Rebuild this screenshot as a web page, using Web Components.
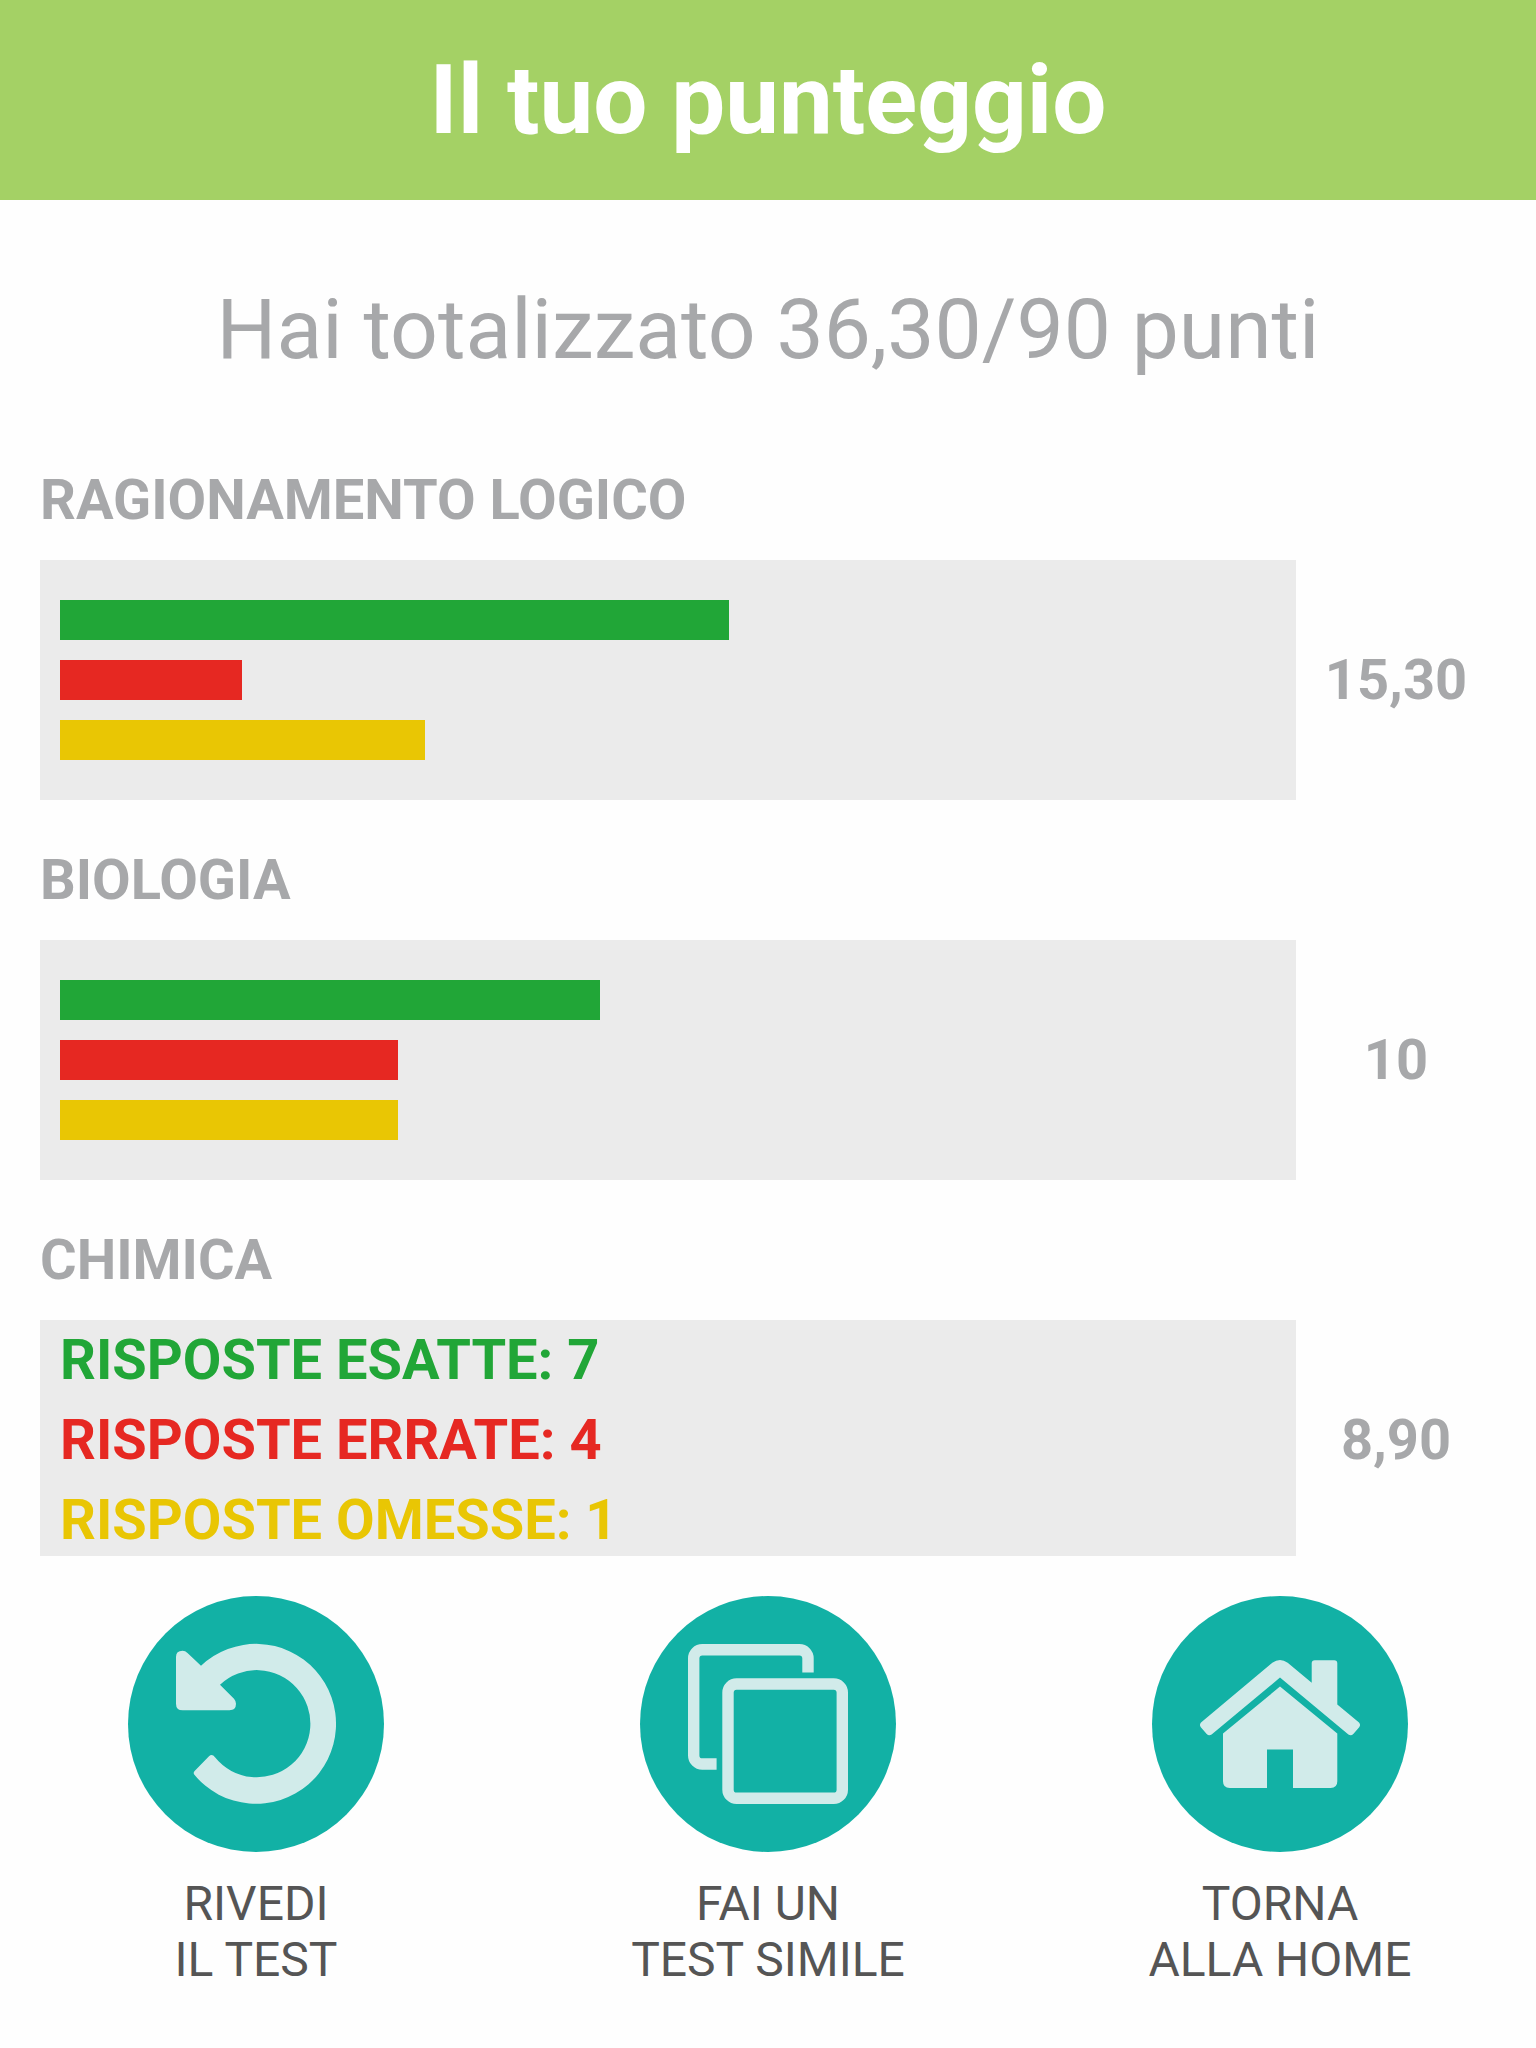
<!DOCTYPE html>
<html lang="it">
<head>
<meta charset="utf-8">
<meta name="viewport" content="width=device-width, initial-scale=1">
<title>Il tuo punteggio</title>
<style>
	body {
		margin: 0;
		background: #fefefe;
		font-family: Roboto, "Liberation Sans", sans-serif;
	}
</style>
</head>
<body>
<score-page>
	<score-header slot="header">Il tuo punteggio</score-header>
	<score-total>Hai totalizzato 36,30/90 punti</score-total>
	<score-subject name="RAGIONAMENTO LOGICO" correct="11" wrong="3" blank="6" score="15,30"></score-subject>
	<score-subject name="BIOLOGIA" correct="8" wrong="5" blank="5" score="10"></score-subject>
	<score-subject name="CHIMICA" correct="7" wrong="4" blank="1" score="8,90" open></score-subject>
	<score-action slot="actions" icon="undo" href="#rivedi">RIVEDI<br>IL TEST</score-action>
	<score-action slot="actions" icon="copy" href="#simile">FAI UN<br>TEST SIMILE</score-action>
	<score-action slot="actions" icon="home" href="#home">TORNA<br>ALLA HOME</score-action>
</score-page>

<script>
class ScoreElement extends HTMLElement {
	constructor() {
		super();

		this.attachShadow({ mode: "open" });
	}

	connectedCallback() {
		this._render();
	}

	_render() {
		const template = document.createElement("template");

		template.innerHTML = this._getMarkup();
		this.shadowRoot.replaceChildren(template.content.cloneNode(true));
	}
}

class ScorePage extends ScoreElement {
	_getMarkup() {
		return `
			<style>
				:host {
					display: flex;
					flex-direction: column;
					height: 100vh;
				}

				main {
					flex: 1;
					min-height: 0;
					overflow-y: auto;
					scrollbar-width: none;
				}

				nav {
					display: grid;
					grid-template-columns: repeat(3, 1fr);
					padding: 40px 0 60px;
				}
			</style>
			<slot name="header"></slot>
			<main><slot></slot></main>
			<nav><slot name="actions"></slot></nav>
		`;
	}
}

class ScoreHeader extends ScoreElement {
	_getMarkup() {
		return `
			<style>
				:host {
					display: block;
					padding: 40px;
					background: #a4d165;
					color: #fff;
					text-align: center;
				}

				h1 {
					margin: 0;
					font-size: 96px;
					line-height: 120px;
				}
			</style>
			<h1><slot></slot></h1>
		`;
	}
}

class ScoreTotal extends ScoreElement {
	_getMarkup() {
		return `
			<style>
				:host {
					display: block;
					padding: 70px 40px 50px;
					color: #a7a8aa;
					text-align: center;
				}

				p {
					margin: 0;
					font-size: 84px;
					line-height: 120px;
				}
			</style>
			<p><slot></slot></p>
		`;
	}
}

class ScoreSubject extends ScoreElement {
	connectedCallback() {
		super.connectedCallback();

		this.shadowRoot.addEventListener("click", (e) => {
			if (e.target.closest("button")) {
				this.toggleAttribute("open");
				this._render();
			}
		});
	}

	_getCount(name) {
		return parseInt(this.getAttribute(name), 10) || 0;
	}

	_getMarkup() {
		const open = this.hasAttribute("open");
		const rows = [
			{ type: "correct", label: "RISPOSTE ESATTE" },
			{ type: "wrong", label: "RISPOSTE ERRATE" },
			{ type: "blank", label: "RISPOSTE OMESSE" }
		];
		const total = rows.reduce((sum, row) => sum + this._getCount(row.type), 0);

		const content = rows.map(({ type, label }) => {
			const count = this._getCount(type);

			return open
				? `<span class="text ${type}">${label}: ${count}</span>`
				: `<span class="bar ${type}" style="width: calc(100% * ${count} / ${total})"></span>`;
		}).join("");

		return `
			<style>
				:host {
					display: block;
					padding: 0 40px 20px;
					color: #a7a8aa;
					font-size: 56px;
					font-weight: bold;
				}

				h2 {
					margin: 0;
					font-size: 56px;
					line-height: 120px;
				}

				.row {
					display: grid;
					grid-template-columns: 1fr 200px;
					align-items: center;
				}

				button {
					display: flex;
					flex-direction: column;
					gap: 20px;
					padding: 40px 20px;
					border: 0;
					background: #ebebeb;
					font: inherit;
					text-align: left;
					cursor: pointer;
				}

				button.open {
					gap: 0;
					padding: 0 20px;
				}

				.bar {
					height: 40px;
					background: var(--color);
				}

				.text {
					color: var(--color);
					line-height: 80px;
				}

				.correct {
					--color: #21a637;
				}

				.wrong {
					--color: #e62822;
				}

				.blank {
					--color: #e9c604;
				}

				.score {
					text-align: center;
				}
			</style>
			<h2 id="name">${this.getAttribute("name")}</h2>
			<div class="row">
				<button type="button" class="${open ? "open" : ""}" aria-expanded="${open}" aria-describedby="name">${content}</button>
				<span class="score">${this.getAttribute("score")}</span>
			</div>
		`;
	}
}

class ScoreAction extends ScoreElement {
	static get icons() {
		return {
			undo: `
				<path fill="currentColor" d="M48 61Q48 54.7 54.5 54.7Q57.3 54.7 59.5 57L73 69.8A80 80 0 1 1 66.2 178.6Q65 176.6 66.6 175L81 160.2Q84.2 157.4 87 161.3A53.6 53.6 0 1 0 92 88.7L106 102.7Q108 105 108 107.8Q108 114.3 101.4 114.3H54.7Q48 114.3 48 107.7Z"/>
			`,
			copy: `
				<g fill="none" stroke="currentColor" stroke-width="11.4">
					<path d="M76.6 168H62.3a8.6 8.6 0 0 1-8.6-8.6V62.3a8.6 8.6 0 0 1 8.6-8.6h97.1a8.6 8.6 0 0 1 8.6 8.6v14.2"/>
					<rect x="88" y="88" width="114.3" height="114.3" rx="8.6"/>
				</g>
			`,
			home: `
				<g fill="currentColor">
					<path d="M120.3 66.8Q128 61.4 135.7 66.8L159.7 86.8V67.3Q159.7 64.2 162.8 64.2H182.2Q185.3 64.2 185.3 67.3V108.6L207 126.6Q209 129 207.2 131.2L201.3 138Q199 140.2 196.4 138.4L128 81.6L59.6 138.4Q57 140.2 54.7 138L48.8 131.2Q47 129 49 126.6Z"/>
					<path d="M128 90.6L185.3 137.6V185.3Q185.3 192 178.6 192H141V153.4H115V192H77.7Q71 192 71 185.3V137.6Z"/>
				</g>
			`
		};
	}

	_getMarkup() {
		return `
			<style>
				:host {
					display: block;
				}

				a {
					display: flex;
					flex-direction: column;
					align-items: center;
					gap: 24px;
					color: #555;
					font-size: 48px;
					line-height: 56px;
					text-align: center;
					text-decoration: none;
				}

				svg {
					width: 256px;
					height: 256px;
					border-radius: 50%;
					background: #12b1a5;
					color: #d1ebea;
				}
			</style>
			<a href="${this.getAttribute("href")}">
				<svg viewBox="0 0 256 256" aria-hidden="true">${ScoreAction.icons[this.getAttribute("icon")]}</svg>
				<span><slot></slot></span>
			</a>
		`;
	}
}

customElements.define("score-page", ScorePage);
customElements.define("score-header", ScoreHeader);
customElements.define("score-total", ScoreTotal);
customElements.define("score-subject", ScoreSubject);
customElements.define("score-action", ScoreAction);
</script>
</body>
</html>
